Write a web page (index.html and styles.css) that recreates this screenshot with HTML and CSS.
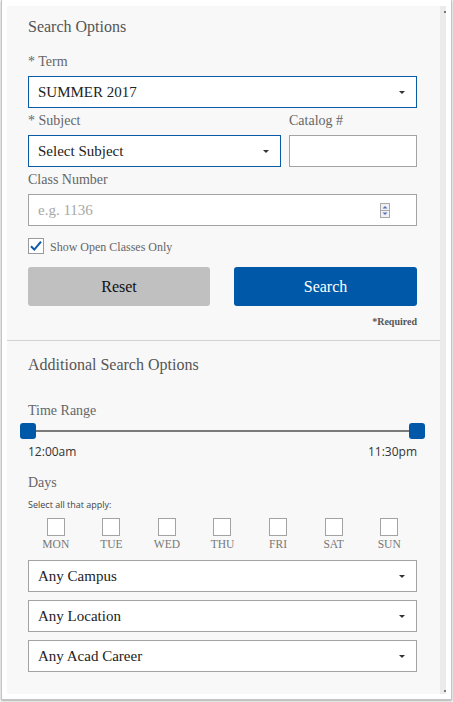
FILE: index.html
```html
<!DOCTYPE html>
<html>
<head>
<meta charset="utf-8">
<link rel="stylesheet" href="styles.css">
</head>
<body>
<div class="window">
  <div class="panel">
    <section class="sec sec-main">
      <h2 class="heading">Search Options</h2>
      <div class="label lbl-term">* Term</div>
      <div class="select active"><span>SUMMER 2017</span><i class="caret"></i></div>
      <div class="row2">
        <div class="col">
          <div class="label">* Subject</div>
          <div class="select active"><span>Select Subject</span><i class="caret"></i></div>
        </div>
        <div class="col">
          <div class="label">Catalog #</div>
          <div class="input"></div>
        </div>
      </div>
      <div class="label">Class Number</div>
      <div class="input number">
        <span class="ph">e.g. 1136</span>
        <span class="spin">
          <svg width="10" height="15" viewBox="0 0 10 15">
            <rect x="0.5" y="0.5" width="9" height="14" fill="#eef0f6" stroke="#a9a9a9"/>
            <line x1="0.5" y1="7.5" x2="9.5" y2="7.5" stroke="#a9a9a9"/>
            <path d="M2.5 5.5 L5 3 L7.5 5.5 Z" fill="#5b6fb5"/>
            <path d="M2.5 9.5 L5 12 L7.5 9.5 Z" fill="#5b6fb5"/>
          </svg>
        </span>
      </div>
      <div class="check-row">
        <span class="checkbox">
          <svg width="16" height="16" viewBox="0 0 16 16">
            <path d="M3 8.2 L6.3 11.6 L13 3.6" fill="none" stroke="#0b5aa8" stroke-width="2"/>
          </svg>
        </span>
        <span class="check-label">Show Open Classes Only</span>
      </div>
      <div class="buttons">
        <div class="btn reset">Reset</div>
        <div class="btn search">Search</div>
      </div>
      <div class="required">*Required</div>
    </section>
    <section class="sec sec-extra">
      <h2 class="heading">Additional Search Options</h2>
      <div class="label lbl-time">Time Range</div>
      <div class="slider">
        <span class="handle"></span>
        <span class="track"></span>
        <span class="handle"></span>
      </div>
      <div class="times"><span>12:00am</span><span>11:30pm</span></div>
      <div class="label lbl-days">Days</div>
      <div class="hint">Select all that apply:</div>
      <div class="days">
        <div class="day"><span class="box"></span><span class="dname">MON</span></div>
        <div class="day"><span class="box"></span><span class="dname">TUE</span></div>
        <div class="day"><span class="box"></span><span class="dname">WED</span></div>
        <div class="day"><span class="box"></span><span class="dname">THU</span></div>
        <div class="day"><span class="box"></span><span class="dname">FRI</span></div>
        <div class="day"><span class="box"></span><span class="dname">SAT</span></div>
        <div class="day"><span class="box"></span><span class="dname">SUN</span></div>
      </div>
      <div class="dropdowns">
        <div class="select"><span>Any Campus</span><i class="caret"></i></div>
        <div class="select"><span>Any Location</span><i class="caret"></i></div>
        <div class="select"><span>Any Acad Career</span><i class="caret"></i></div>
      </div>
    </section>
  </div>
  <div class="scrollbar"><i class="dot"></i><i class="dot"></i></div>
</div>
</body>
</html>
```

FILE: styles.css
```css
* { box-sizing: border-box; }
html, body { margin: 0; padding: 0; background: #ffffff; }
body { width: 453px; height: 702px; overflow: hidden; }

.window {
  margin-left: 1px;
  width: 451px;
  height: 700px;
  border: 1px solid #c4c4c4;
  border-top: none;
  box-shadow: 0 1px 2px rgba(0,0,0,0.35);
  background: #ffffff;
  padding: 6px 5px 5px 5px;
  display: flex;
}

.panel {
  width: 433px;
  height: 688px;
  background: #f8f8f8;
  font-family: "Liberation Serif", "Times New Roman", serif;
  color: #666;
}

.scrollbar {
  width: 6px;
  height: 688px;
  background: #ebebeb;
  display: flex;
  flex-direction: column;
  justify-content: space-between;
  align-items: flex-end;
  padding: 5px 0 2px 0;
}
.scrollbar .dot { display: block; width: 2px; height: 2px; background: #777; }

.sec { padding: 0 23px 0 21px; }
.sec-main { height: 335px; border-bottom: 1px solid #d2d2d2; padding-top: 11px; }
.sec-extra { padding-top: 14px; }

.heading {
  margin: 0;
  font-size: 16px;
  line-height: 20px;
  font-weight: normal;
  color: #555;
}

.label {
  font-size: 14px;
  line-height: 18px;
  color: #666;
  margin-bottom: 5px;
  padding-top: 1px;
  height: 19px;
}
.lbl-term { margin-top: 15px; }

.select, .input {
  height: 32px;
  background: #fff;
  border: 1px solid #a3a3a3;
  display: flex;
  align-items: center;
  padding: 0 0 0 9px;
  font-size: 15px;
  color: #222;
  position: relative;
}
.select span { flex: 1; padding-top: 1px; }
.select.active { border-color: #0b5aa8; }
.caret {
  width: 0; height: 0;
  border-left: 3.5px solid transparent;
  border-right: 3.5px solid transparent;
  border-top: 3.5px solid #333;
  margin-right: 11px;
}

.row2 {
  display: grid;
  grid-template-columns: 253px 128px;
  column-gap: 8px;
  margin-top: 3px;
  margin-bottom: 3px;
}

.number { justify-content: space-between; padding-right: 26px; }
.ph { color: #a8a8a8; padding-top: 1px; }
.spin { display: flex; margin-top: 1px; }

.check-row {
  display: flex;
  align-items: center;
  gap: 6px;
  margin-top: 12px;
  height: 16px;
}
.checkbox {
  width: 16px; height: 16px;
  border: 1px solid #9a9a9a;
  background: #fff;
  display: flex;
  align-items: center;
  justify-content: center;
}
.checkbox svg { display: block; flex: none; }
.check-label { font-size: 12px; color: #666; padding-top: 2px; }

.buttons {
  display: grid;
  grid-template-columns: 182px 183px;
  justify-content: space-between;
  margin-top: 13px;
}
.btn {
  height: 39px;
  border-radius: 3px;
  display: flex;
  align-items: center;
  justify-content: center;
  font-size: 16px;
  padding-top: 1px;
}
.reset { background: #c0c0c0; color: #111; }
.search { background: #0058a8; color: #fff; }

.required {
  text-align: right;
  font-size: 10px;
  font-weight: bold;
  color: #555;
  margin-top: 10px;
  line-height: 12px;
}

.lbl-time { margin-top: 26px; margin-bottom: 3px; }

.slider {
  display: flex;
  align-items: center;
  margin: 0 -8px;
  height: 16px;
}
.handle {
  width: 16px; height: 16px;
  background: #0058a8;
  border-radius: 3px;
}
.track { flex: 1; height: 2px; background: #7a7a7a; }

.times {
  display: flex;
  justify-content: space-between;
  font-family: "Open Sans", "Noto Sans", sans-serif;
  font-size: 12px;
  color: #333;
  line-height: 16px;
  margin-top: 5px;
}

.lbl-days { margin-top: 13px; margin-bottom: 0; }

.hint {
  font-family: "Open Sans", "Noto Sans", sans-serif;
  font-size: 9px;
  color: #444;
  line-height: 12px;
  padding-top: 7px;
}

.days {
  display: grid;
  grid-template-columns: repeat(7, 1fr);
  padding-top: 7px;
}
.day { display: flex; flex-direction: column; align-items: center; }
.box {
  width: 18px; height: 18px;
  border: 1px solid #a3a3a3;
  background: #fff;
}
.dname {
  font-size: 11.5px;
  color: #777;
  line-height: 13px;
  margin-top: 2px;
}

.dropdowns {
  display: flex;
  flex-direction: column;
  gap: 8px;
  padding-top: 9px;
}
.dropdowns .select { border-color: #a3a3a3; }
```
